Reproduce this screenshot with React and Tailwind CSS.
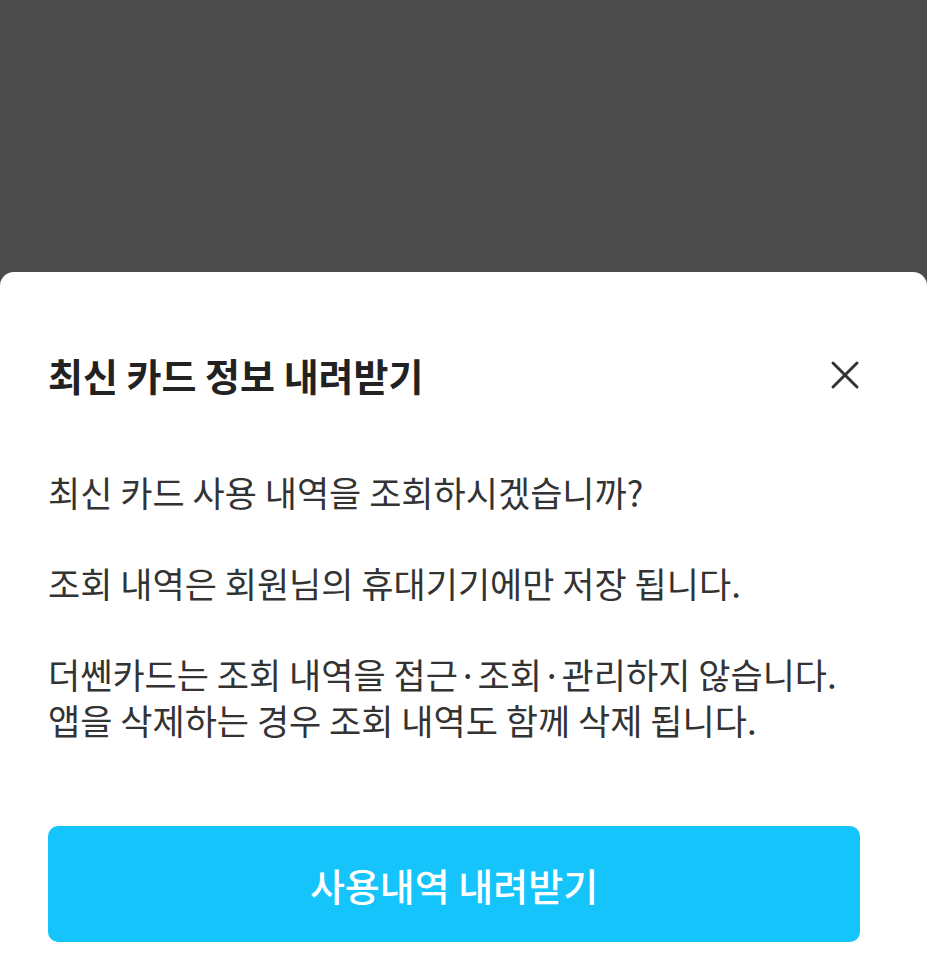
import React from "react";

export default function App() {
  return (
    <div
      className="flex h-[966px] w-full flex-col bg-[#4b4b4b]"
      style={{ fontFamily: '"Noto Sans CJK KR", "Noto Sans", sans-serif' }}
    >
      <div className="h-[272px] shrink-0" />
      <div className="flex flex-1 flex-col rounded-t-[14px] bg-white px-[48px] pt-[83px]">
        <div className="flex items-center justify-between">
          <h1 className="text-[38px] font-bold leading-[40px] text-[#222222]">
            최신 카드 정보 내려받기
          </h1>
          <button className="mr-[18px] flex h-[32px] w-[32px] items-center justify-center text-[#333333]" aria-label="닫기">
            <svg width="30" height="30" viewBox="0 0 30 30" fill="none">
              <path d="M3 3L27 27M27 3L3 27" stroke="currentColor" strokeWidth="3" strokeLinecap="round" />
            </svg>
          </button>
        </div>
        <div className="mt-[74px] flex flex-col gap-[45px] text-[35px] leading-[46px] text-[#333333]">
          <p>최신 카드 사용 내역을 조회하시겠습니까?</p>
          <p>조회 내역은 회원님의 휴대기기에만 저장 됩니다.</p>
          <p>
            더쎈카드는 조회 내역을 접근·조회·관리하지 않습니다.
            <br />
            앱을 삭제하는 경우 조회 내역도 함께 삭제 됩니다.
          </p>
        </div>
        <button className="mt-[83px] mr-[19px] flex h-[116px] items-center justify-center rounded-[10px] bg-[#16c4fc] text-[38px] font-medium text-white">
          사용내역 내려받기
        </button>
      </div>
    </div>
  );
}
